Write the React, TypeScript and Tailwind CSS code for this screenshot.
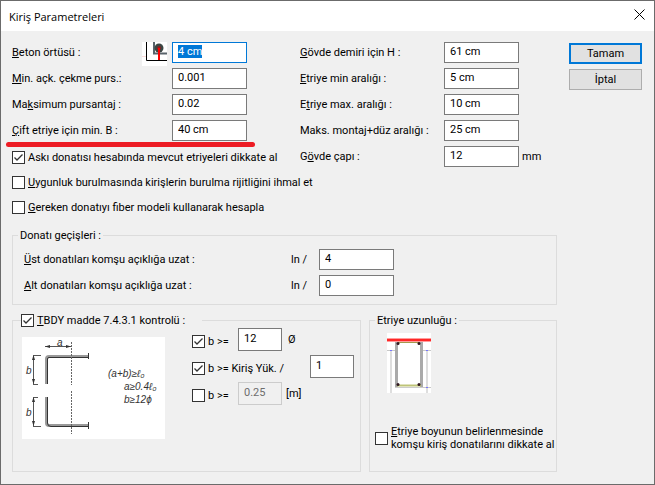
import { useEffect, useRef, useState } from 'react'
import type { ReactNode } from 'react'

function Check({ id, defaultChecked = false, children, className = '' }: { id: string; defaultChecked?: boolean; children: ReactNode; className?: string }) {
    const [checked, setChecked] = useState(defaultChecked)

    return (
        <div className={`flex items-center gap-[3px] ${className}`}>
            <span className="relative h-[13px] w-[13px] shrink-0">
                <input
                    id={id}
                    type="checkbox"
                    checked={checked}
                    onChange={e => setChecked(e.target.checked)}
                    className="block h-[13px] w-[13px] appearance-none border border-[#333333] bg-white"
                />
                {checked && (
                    <svg className="pointer-events-none absolute inset-0" width="13" height="13" viewBox="0 0 13 13" fill="none">
                        <path d="M2.5 6.5 L5 9 L10.5 3.5" stroke="#333" strokeWidth="1.3" />
                    </svg>
                )}
            </span>
            <label htmlFor={id}>{children}</label>
        </div>
    )
}

function Field({ id, label, value, unit, icon }: { id: string; label: ReactNode; value: string; unit?: string; icon?: ReactNode }) {
    return (
        <div className="flex h-[21px] items-center">
            <label htmlFor={id} className="flex-1">{label}</label>
            {icon}
            <TextBox id={id} value={value} className="h-[21px] w-[75px]" />
            {unit && (
                <span className="w-0 whitespace-nowrap">
                    <span className="pl-[3px]">{unit}</span>
                </span>
            )}
        </div>
    )
}

function TextBox({ id, value, className, disabled, label }: { id: string; value: string; className: string; disabled?: boolean; label?: string }) {
    return (
        <input
            id={id}
            type="text"
            aria-label={label}
            defaultValue={value}
            disabled={disabled}
            className={`shrink-0 border border-[#7a7a7a] bg-white pb-0.5 pl-[5px] outline-none selection:bg-[#0078d7] selection:text-white focus:border-[#0078d7] disabled:border-[#cccccc] disabled:bg-[#f0f0f0] disabled:text-[#6d6d6d] ${className}`}
        />
    )
}

function CoverIcon() {
    return (
        <svg width="25" height="24" viewBox="0 0 25 24" className="mr-[5px] shrink-0 self-start">
            <rect width="25" height="24" fill="#fff" />
            <path d="M0 14.5H4" stroke="#fbdcdc" />
            <path d="M4.5 0V18.5H25" stroke="#000" fill="none" />
            <path d="M12 0V11.5H25" stroke="#59636a" strokeWidth="2" fill="none" />
            <circle cx="17" cy="6" r="4.5" fill="#3c4643" />
            <circle cx="17" cy="6" r="2" fill="#8a2020" />
            <path d="M17 6V18" stroke="#f00" strokeWidth="2" />
        </svg>
    )
}

function HookDiagram() {
    return (
        <svg width="143" height="102" viewBox="0 0 143 102" fill="none" className="shrink-0 bg-white">
            {/* bars */}
            <g stroke="#999" strokeWidth="3">
                <path d="M24.5 47V22Q24.5 19.5 27 19.5H67" />
                <path d="M24.5 60V86Q24.5 88.5 27 88.5H67" />
            </g>
            <g stroke="#333">
                <path d="M25.5 47V22Q25.5 20.5 27 20.5H67M25.5 60V86Q25.5 89.5 29 89.5H67" />
                <path d="M66.5 16V22M66.5 85V92" />
            </g>
            <path d="M49.5 5V48M49.5 54V97" stroke="#666" strokeDasharray="2 1" />
            {/* dimensions */}
            <path d="M23 9.5H49M11.5 18V47M11.5 60V89M11 18.5H19M11 47.5H16M11 60.5H16M11 89.5H19" stroke="#555" />
            <g fill="#333">
                <path d="M23 9.5L28 8V11ZM49 9.5L44 8V11ZM11.5 18L10 23H13ZM11.5 47L10 42H13ZM11.5 60L10 65H13ZM11.5 89L10 84H13Z" />
            </g>
            <g fill="#333" fontFamily="'Liberation Sans', sans-serif" fontStyle="italic" fontSize="10">
                <text x="35" y="9">a</text>
                <text x="4" y="37">b</text>
                <text x="4" y="79">b</text>
                <text x="86" y="40">(a+b)≥ℓ₀</text>
                <text x="102" y="53">a≥0.4ℓ₀</text>
                <text x="102" y="66">b≥12ϕ</text>
            </g>
        </svg>
    )
}

function BeamSection() {
    return (
        <svg width="44" height="60" viewBox="0 0 44 60" fill="none" className="bg-white">
            <path d="M0 7H44" stroke="#ff9c9c" strokeWidth="4" />
            <path d="M0 7H44" stroke="#f00" strokeWidth="1.5" />
            <path d="M0 17.5H8M36 17.5H44M36 54.5H44" stroke="#c8c8c8" />
            <path d="M4 18V60M40 18V60" stroke="#dedede" strokeWidth="2" />
            <path d="M9.5 9V54M34.5 9V54" stroke="#aaa" strokeWidth="3" />
            <path d="M8 54.5H36" stroke="#ccc" />
            <path d="M11 9.5H33" stroke="#a39a4c" />
            <path d="M10 52.5H34" stroke="#bfc478" strokeWidth="2" />
            <path d="M3 17.5H5M39 17.5H41M39 54.5H41" stroke="#77f" />
            <g fill="#301820">
                <circle cx="11" cy="10.5" r="1.5" />
                <circle cx="32" cy="10.5" r="1.5" />
                <circle cx="11" cy="51.5" r="1.5" />
                <circle cx="32" cy="51.5" r="1.5" />
            </g>
        </svg>
    )
}

export default function App() {
    const formRef = useRef<HTMLFormElement>(null)

    // the first field opens focused with its value selected
    useEffect(() => {
        const first = formRef.current?.querySelector<HTMLInputElement>('#cover')
        first?.focus()
        first?.select()
    }, [])

    return (
        <div className="min-h-screen border border-[#6b6b6b] bg-[#f0f0f0] font-[Roboto,sans-serif] text-[11px] leading-[13px] text-black">
            <header className="flex h-[30px] items-center justify-between bg-white pl-2 pr-[5px]">
                <h1 className="font-['Open_Sans',sans-serif] text-[11px]">Kiriş Parametreleri</h1>
                <button type="button" aria-label="Kapat" className="p-1 pb-2">
                    <svg width="11" height="11" viewBox="0 0 11 11">
                        <path d="M0.5 0.5L10.5 10.5M10.5 0.5L0.5 10.5" stroke="#000" />
                    </svg>
                </button>
            </header>

            <form ref={formRef} onSubmit={e => e.preventDefault()} className="flex gap-3 pl-[11px] pr-3 pt-[11px]">
                <div className="min-w-0 flex-1">
                    <div className="flex">
                        <div className="w-72">
                            <div className="flex w-[235px] flex-col gap-[5px]">
                                <Field id="cover" label={<><u>B</u>eton örtüsü :</>} value="4 cm" icon={<CoverIcon />} />
                                <Field id="minRatio" label={<><u>M</u>in. açk. çekme purs.:</>} value="0.001" />
                                <Field id="maxRatio" label={<>Ma<u>k</u>simum pursantaj :</>} value="0.02" />
                                <Field id="minB" label={<><u>Ç</u>ift etriye için min. B :</>} value="40 cm" />
                            </div>
                            <div className="-ml-1.5 mt-px h-[5px] w-[249px] rounded-full bg-[#ed1c24]" />
                            <div className="mt-1 flex flex-col gap-3 whitespace-nowrap">
                                <Check id="hanger" defaultChecked>Askı donatısı hesabında mevcut etriyeleri dikkate al</Check>
                                <Check id="torsion"><u>U</u>ygunluk burulmasında kirişlerin burulma rijitliğini ihmal et</Check>
                                <Check id="fiber"><u>G</u>ereken donatıyı fiber modeli kullanarak hesapla</Check>
                            </div>
                        </div>
                        <div className="flex w-[219px] flex-col gap-[5px]">
                            <Field id="bodyH" label={<><u>G</u>övde demiri için H :</>} value="61 cm" />
                            <Field id="minStirrup" label={<><u>E</u>triye min aralığı :</>} value="5 cm" />
                            <Field id="maxStirrup" label={<>E<u>t</u>riye max. aralığı :</>} value="10 cm" />
                            <Field id="maxMount" label="Maks. montaj+düz aralığı :" value="25 cm" />
                            <Field id="bodyDia" label={<>G<u>ö</u>vde çapı :</>} value="12" unit="mm" />
                        </div>
                    </div>

                    <fieldset className="mt-[15px] border border-[#dcdcdc] pb-2 pl-[11px]">
                        <legend className="-ml-1.5 px-0.5">Donatı geçişleri :</legend>
                        <div className="mt-[7px] flex w-[370px] flex-col gap-[5px]">
                            <div className="flex items-center">
                                <label htmlFor="topBars" className="w-[267px]"><u>Ü</u>st donatıları komşu açıklığa uzat :</label>
                                <span className="flex-1">ln /</span>
                                <TextBox id="topBars" value="4" className="h-[21px] w-[75px]" />
                            </div>
                            <div className="flex items-center">
                                <label htmlFor="bottomBars" className="w-[267px]"><u>A</u>lt donatıları komşu açıklığa uzat :</label>
                                <span className="flex-1">ln /</span>
                                <TextBox id="bottomBars" value="0" className="h-[21px] w-[75px]" />
                            </div>
                        </div>
                    </fieldset>

                    <div className="mt-[9px] flex gap-2">
                        <fieldset className="h-[158px] min-w-0 flex-1 border border-[#dcdcdc] pl-[9px]">
                            <legend className="-ml-px w-[181px]">
                                <Check id="tbdy" defaultChecked><u>T</u>BDY madde 7.4.3.1 kontrolü :</Check>
                            </legend>
                            <div className="flex items-start gap-[27px]">
                                <div className="pt-2.5">
                                    <HookDiagram />
                                </div>
                                <div className="flex flex-col gap-1 whitespace-nowrap pt-px">
                                    <div className="flex items-center">
                                        <Check id="b1" defaultChecked className="w-[46px] pt-1">b &gt;=</Check>
                                        <TextBox id="b1Value" label="b (Ø)" value="12" className="h-[23px] w-11" />
                                        <span className="pl-1.5">Ø</span>
                                    </div>
                                    <div className="flex items-center">
                                        <Check id="b2" defaultChecked className="w-[118px] pt-1">b &gt;= Kiriş Yük. /</Check>
                                        <TextBox id="b2Value" label="Kiriş Yük. /" value="1" className="h-[23px] w-11" />
                                    </div>
                                    <div className="flex items-center">
                                        <Check id="b3" className="w-[46px] pt-1">b &gt;=</Check>
                                        <TextBox id="b3Value" label="b [m]" value="0.25" disabled className="h-[23px] w-11" />
                                        <span className="pl-1">[m]</span>
                                    </div>
                                </div>
                            </div>
                        </fieldset>

                        <fieldset className="h-[158px] w-[188px] min-w-0 shrink-0 border border-[#dcdcdc] pl-[5px]">
                            <legend className="px-0.5">Etriye uzunluğu :</legend>
                            <div className="pl-3 pt-1.5">
                                <BeamSection />
                            </div>
                            <Check id="stirrupLen" className="mt-8 whitespace-nowrap">
                                <u>E</u>triye boyunun belirlenmesinde<br />komşu kiriş donatılarını dikkate al
                            </Check>
                        </fieldset>
                    </div>
                </div>

                <div className="flex w-[73px] flex-col gap-[5px] pt-px">
                    <button type="submit" className="h-[21px] border-2 border-[#0078d7] bg-[#e1e1e1]">Tamam</button>
                    <button type="button" className="h-[21px] border border-[#adadad] bg-[#e1e1e1]">İptal</button>
                </div>
            </form>
        </div>
    )
}
